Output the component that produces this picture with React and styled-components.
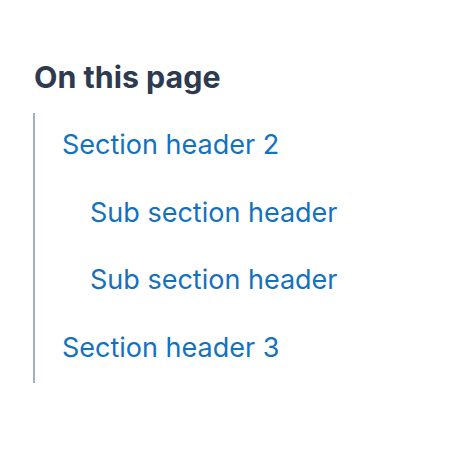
import React from 'react';
import styled, { createGlobalStyle } from 'styled-components';

const GlobalStyle = createGlobalStyle`
  body {
    margin: 0;
    background: #ffffff;
    font-family: Inter, "Noto Sans", sans-serif;
  }
`;

// Table of contents data
const items = [
  { label: 'Section header 2', level: 1 },
  { label: 'Sub section header', level: 2 },
  { label: 'Sub section header', level: 2 },
  { label: 'Section header 3', level: 1 },
];

function App() {
  return (
    <Page>
      <GlobalStyle />
      <Toc>
        <Title>On this page</Title>
        <List>
          {items.map((item, i) => (
            <Item key={i} $level={item.level}>
              <Link href="#">{item.label}</Link>
            </Item>
          ))}
        </List>
      </Toc>
    </Page>
  );
}

const Page = styled.div`
  padding: 57px 33px;
`;

const Toc = styled.nav`
  display: flex;
  flex-direction: column;
`;

const Title = styled.h2`
  margin: 0 0 16px 1px;
  font-size: 30.4px;
  line-height: 40px;
  font-weight: 700;
  color: #2d3a4f;
`;

const List = styled.ul`
  list-style: none;
  margin: 0;
  padding: 14px 0 17px 0;
  border-left: 2px solid #a3afc0;
  display: flex;
  flex-direction: column;
  gap: 31.5px;
`;

const Item = styled.li`
  padding-left: ${(p) => (p.$level === 2 ? 55 : 27)}px;
  font-size: 27px;
  line-height: 36px;
`;

const Link = styled.a`
  color: #1471be;
  text-decoration: none;
`;

export default App;
